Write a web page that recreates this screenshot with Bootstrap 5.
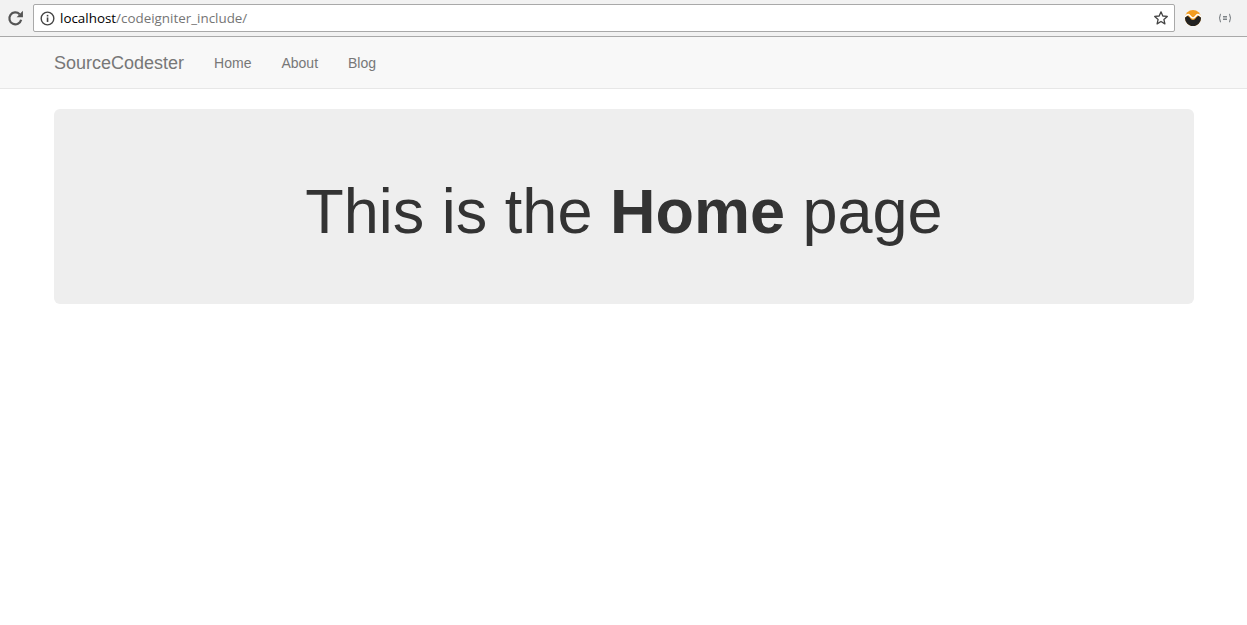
<!DOCTYPE html>
<html lang="en">
<head>
    <meta charset="UTF-8">
    <title>CodeIgniter Include</title>
    <link href="https://cdn.jsdelivr.net/npm/bootstrap@5.3.3/dist/css/bootstrap.min.css" rel="stylesheet">
    <style>
        html, body { height: 100%; }
        body { font-family: "Liberation Sans", Arial, sans-serif; font-size: 14px; color: #333; background: #fff; overflow: hidden; }

        /* browser chrome */
        .chrome-bar { height: 37px; background: #f2f2f2; border-bottom: 1px solid #a9a9a9; padding: 4px 0 0 0; }
        .chrome-reload { width: 30px; height: 28px; flex: none; margin-right: 3px; }
        .chrome-url { width: 1142px; height: 28px; flex: none; background: #fff; border: 1px solid #a9a9a9; border-radius: 2px; padding: 0 5px 0 6px; font-family: "Open Sans", "Noto Sans", sans-serif; font-size: 13.4px; }
        .chrome-host { color: #000; margin-left: 5px; }
        .chrome-path { color: #757575; }
        .chrome-ext { width: 36px; height: 28px; flex: none; }
        .chrome-ext2 { width: 28px; height: 28px; flex: none; }

        /* site navbar */
        .site-nav { height: 52px; background: #f8f8f8; border-bottom: 1px solid #e7e7e7; padding: 1px 54px 0; }
        .site-brand { font-size: 18px; color: #777; text-decoration: none; margin-right: 30px; }
        .site-link { font-size: 14px; color: #777; text-decoration: none; margin-right: 30px; }

        .hero-box { margin: 20px 53px 0 54px; height: 195px; padding-top: 10px; background: #eee; border-radius: 6px; }
        .hero-title { font-size: 63px; font-weight: 400; line-height: 1.1; margin: 0; color: #333; }
        .hero-title b { font-weight: 700; }
    </style>
</head>
<body>
    <div class="chrome-bar d-flex">
        <div class="chrome-reload d-flex align-items-center justify-content-center">
            <svg width="17" height="17" viewBox="0 0 16 16">
                <path d="M13.3 9.2A5.6 5.6 0 1 1 11.9 4" fill="none" stroke="#555" stroke-width="2.100"/>
                <path d="M9 6.800h6V.800z" fill="#555"/>
            </svg>
        </div>
        <div class="chrome-url d-flex align-items-center">
            <svg width="15" height="15" viewBox="0 0 14 14">
                <circle cx="7" cy="7" r="5.900" fill="none" stroke="#444" stroke-width="1.300"/>
                <rect x="6.300" y="6" width="1.500" height="4.200" fill="#444"/>
                <rect x="6.300" y="3.600" width="1.500" height="1.500" fill="#444"/>
            </svg>
            <span class="chrome-host">localhost</span><span class="chrome-path">/codeigniter_include/</span>
            <svg class="ms-auto" width="16" height="16" viewBox="0 0 16 16">
                <path d="M8 1.800l1.800 4.200 4.500.4-3.400 3 1 4.500L8 11.500l-3.900 2.400 1-4.500-3.400-3 4.500-.4z" fill="none" stroke="#444" stroke-width="1.300" stroke-linejoin="round"/>
            </svg>
        </div>
        <div class="chrome-ext d-flex align-items-center justify-content-center">
            <svg width="16" height="16" viewBox="0 0 16 16">
                <circle cx="8" cy="8" r="8" fill="#f39c1f"/>
                <path d="M0 8.200C.2 6.600 1.200 6 2.400 6c2.300 0 3 4 5.600 4s3.300-4 5.600-4c1.200 0 2.200.6 2.400 2.200A8 8 0 0 1 0 8.200z" fill="#222"/>
                <path d="M.2 6.800C1.600 4.400 3.400 4 4.700 5.400 6 6.800 6.800 8 8 8s2-1.200 3.300-2.600c1.300-1.400 3.100-1 4.500 1.400" fill="none" stroke="#fff" stroke-width="1.500"/>
            </svg>
        </div>
        <div class="chrome-ext2 d-flex align-items-center justify-content-center">
            <svg width="14" height="10" viewBox="0 0 14 10" fill="none" stroke="#7d8286" stroke-width="1.200">
                <path d="M3 1C1.500 1 2.500 5 1 5c1.500 0 .5 4 2 4"/>
                <path d="M11 1c1.500 0 .5 4 2 4-1.500 0-.5 4-2 4"/>
                <path d="M5 3.500h4M5 5h4M5 6.500h4"/>
            </svg>
        </div>
    </div>

    <nav class="site-nav d-flex align-items-center">
        <a class="site-brand" href="#">SourceCodester</a>
        <a class="site-link" href="#">Home</a>
        <a class="site-link" href="#">About</a>
        <a class="site-link" href="#">Blog</a>
    </nav>

    <div class="hero-box d-flex align-items-center justify-content-center">
        <h1 class="hero-title">This is the <b>Home</b> page</h1>
    </div>

    <script src="https://cdn.jsdelivr.net/npm/bootstrap@5.3.3/dist/js/bootstrap.bundle.min.js"></script>
</body>
</html>
